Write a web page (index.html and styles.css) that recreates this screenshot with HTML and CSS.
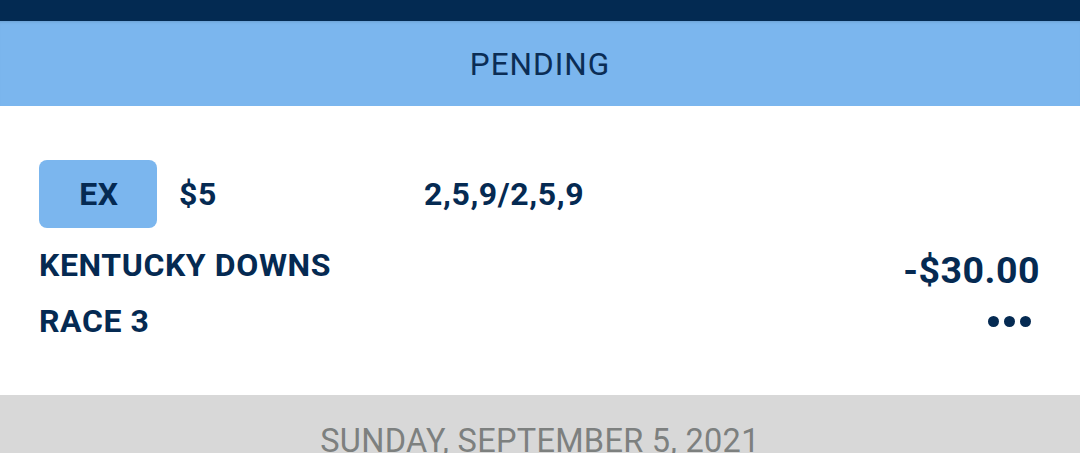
FILE: index.html
```html
<!DOCTYPE html>
<html>
<head>
<meta charset="utf-8">
<link rel="stylesheet" href="styles.css">
</head>
<body>
<div class="topbar"></div>
<div class="status">PENDING</div>
<div class="card">
  <div class="row row-top">
    <div class="badge">EX</div>
    <div class="amount">$5</div>
    <div class="picks">2,5,9/2,5,9</div>
  </div>
  <div class="row row-mid">
    <div class="track">KENTUCKY DOWNS</div>
    <div class="total">-$30.00</div>
  </div>
  <div class="row row-bot">
    <div class="race">RACE 3</div>
    <div class="more"><span class="dot"></span><span class="dot"></span><span class="dot"></span></div>
  </div>
</div>
<div class="date">SUNDAY, SEPTEMBER 5, 2021</div>
</body>
</html>
```
FILE: styles.css
```css
* { box-sizing: border-box; }
html, body { margin: 0; padding: 0; }
body {
  width: 1080px;
  height: 453px;
  overflow: hidden;
  font-family: Roboto, "Liberation Sans", sans-serif;
  background: #ffffff;
  color: #052a52;
}
.topbar {
  height: 21px;
  background: #032a52;
}
.status {
  height: 85px;
  background: #7bb6ee;
  display: flex;
  align-items: center;
  justify-content: center;
  font-size: 31.5px;
  letter-spacing: 1px;
  color: #0b2d55;
  padding-top: 1px;
  box-shadow: inset 0 3px 3px -2px rgba(0,0,0,0.12);
}
.card {
  height: 289px;
  padding: 54px 40px 0 39px;
  display: flex;
  flex-direction: column;
}
.row {
  display: flex;
  align-items: center;
  font-weight: 700;
  font-size: 32px;
  letter-spacing: 0.6px;
}
.row-top { height: 68px; }
.badge {
  width: 118px;
  height: 68px;
  border-radius: 8px;
  background: #7bb6ee;
  display: flex;
  align-items: center;
  justify-content: center;
  font-size: 32px;
  padding-left: 2px;
}
.amount { margin-left: 22px; width: 245px; }
.row-mid {
  justify-content: space-between;
  margin-top: 17px;
  height: 40px;
}
.total {
  font-size: 37.5px;
  letter-spacing: 0.5px;
  padding-top: 10px;
}
.row-bot {
  justify-content: space-between;
  margin-top: 16px;
  height: 40px;
}
.more {
  display: flex;
  gap: 5px;
  margin-right: 9px;
}
.dot {
  width: 11px;
  height: 11px;
  border-radius: 50%;
  background: #052a52;
}
.date {
  height: 58px;
  background: #d8d8d8;
  color: #7d807f;
  font-size: 32.5px;
  text-align: center;
  padding-top: 26px;
  line-height: 40px;
  letter-spacing: 0.3px;
}
```
